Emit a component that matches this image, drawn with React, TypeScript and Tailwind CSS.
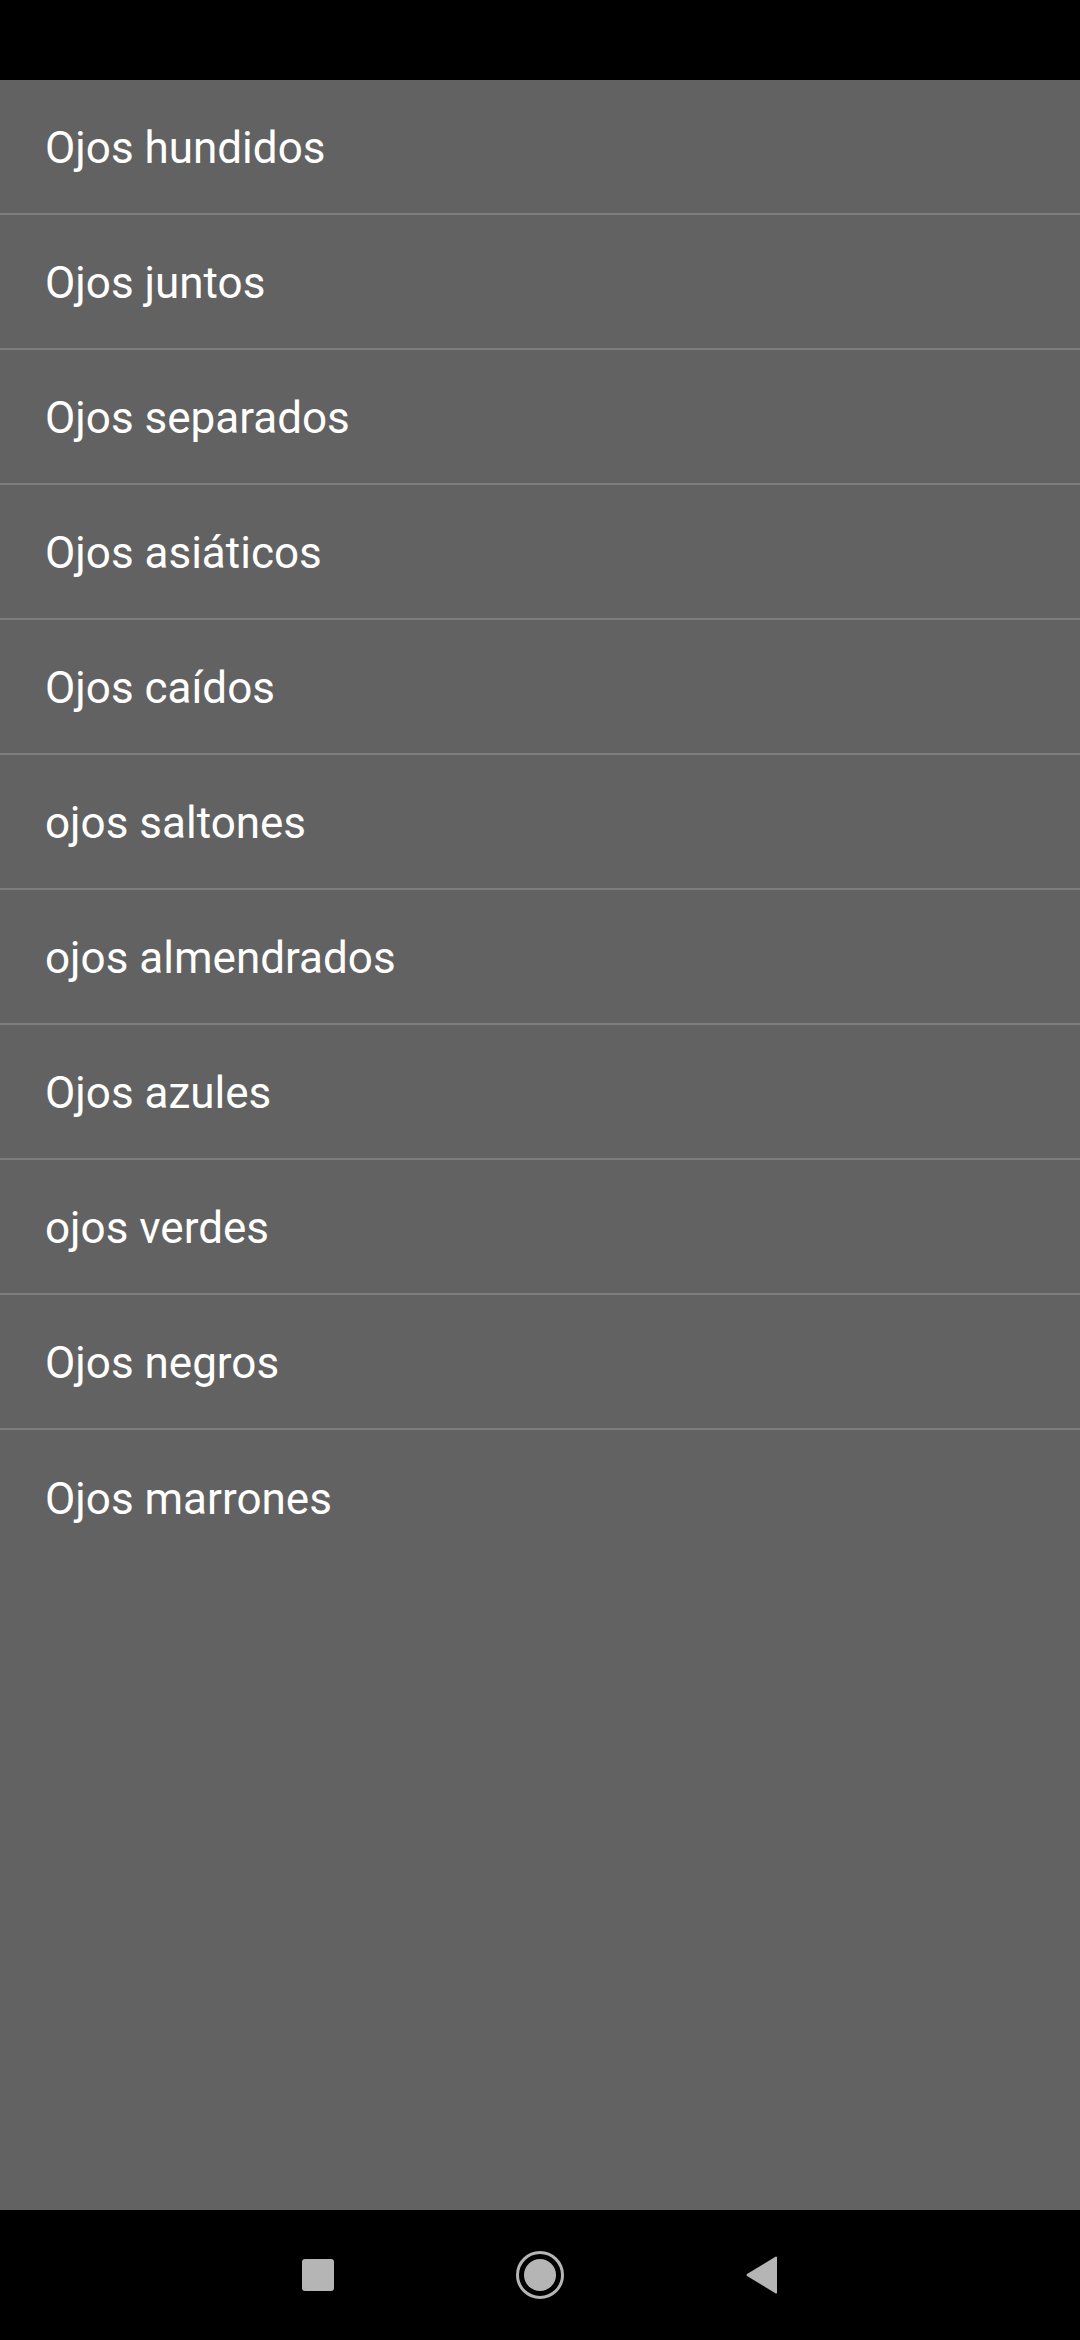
const items = [
  "Ojos hundidos",
  "Ojos juntos",
  "Ojos separados",
  "Ojos asiáticos",
  "Ojos caídos",
  "ojos saltones",
  "ojos almendrados",
  "Ojos azules",
  "ojos verdes",
  "Ojos negros",
  "Ojos marrones",
];

export default function App() {
  return (
    <div className="flex h-[2340px] w-[1080px] flex-col bg-black font-['Roboto',sans-serif]">
      {/* status bar */}
      <div className="h-[80px] shrink-0 bg-black" />

      {/* list */}
      <div className="flex-1 bg-[#626262]">
        {items.map((label, i) => (
          <div
            key={label}
            className={`flex h-[135px] items-center pl-[45px] pt-[2px] text-[44px] text-white ${
              i < items.length - 1 ? "border-b-2 border-[#7e7e7e]" : ""
            }`}
          >
            {label}
          </div>
        ))}
      </div>

      {/* nav bar */}
      <div className="flex h-[130px] shrink-0 items-center justify-center bg-black">
        <div className="flex w-[476px] items-center justify-between">
          <div className="h-[32px] w-[32px] rounded-[3px] bg-[#b5b5b5]" />
          <svg width="50" height="50" viewBox="0 0 50 50">
            <circle cx="25" cy="25" r="22.5" fill="none" stroke="#b5b5b5" strokeWidth="3" />
            <circle cx="25" cy="25" r="16" fill="#b5b5b5" />
          </svg>
          <svg width="32" height="38" viewBox="0 0 32 38">
            <path d="M31 1 L31 37 Q30 38 29 37 L1 20 Q0 19 1 18 L29 1 Q30 0 31 1 Z" fill="#b5b5b5" />
          </svg>
        </div>
      </div>
    </div>
  );
}
